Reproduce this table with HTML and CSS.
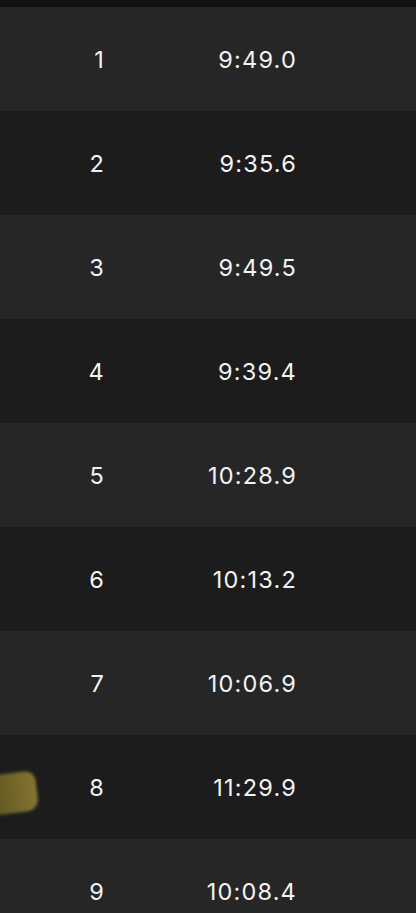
FILE: index.html
```html
<!DOCTYPE html>
<html>
<head>
<meta charset="utf-8">
<link rel="stylesheet" href="styles.css">
</head>
<body>
<div class="top"></div>
<div class="list">
  <div class="row odd"><span class="num">1</span><span class="time">9:49.0</span></div>
  <div class="row even"><span class="num">2</span><span class="time">9:35.6</span></div>
  <div class="row odd"><span class="num">3</span><span class="time">9:49.5</span></div>
  <div class="row even"><span class="num">4</span><span class="time">9:39.4</span></div>
  <div class="row odd"><span class="num">5</span><span class="time">10:28.9</span></div>
  <div class="row even"><span class="num">6</span><span class="time">10:13.2</span></div>
  <div class="row odd"><span class="num">7</span><span class="time">10:06.9</span></div>
  <div class="row even"><div class="blob"></div><span class="num">8</span><span class="time">11:29.9</span></div>
  <div class="row odd"><span class="num">9</span><span class="time">10:08.4</span></div>
</div>
</body>
</html>
```
FILE: styles.css
```css
html, body {
  margin: 0;
  padding: 0;
  background: #1c1c1c;
  height: 913px;
  overflow: hidden;
  font-family: Inter, "Liberation Sans", sans-serif;
}
.top {
  height: 7px;
  background: #111111;
}
.row {
  position: relative;
  height: 104px;
  display: grid;
  grid-template-columns: 105px 192px;
  align-items: center;
  color: #f2f2f2;
  font-size: 23.5px;
  letter-spacing: 1.2px;
  overflow: hidden;
}
.odd { background: #262626; }
.even { background: #1c1c1c; }
.num, .time {
  text-align: right;
}
.blob {
  position: absolute;
  left: -10px;
  top: 38px;
  width: 47px;
  height: 40px;
  background: linear-gradient(90deg, #5f5522, #857531);
  border-radius: 4px 10px 12px 6px;
  transform: rotate(-7deg);
  filter: blur(1.5px);
}
```
